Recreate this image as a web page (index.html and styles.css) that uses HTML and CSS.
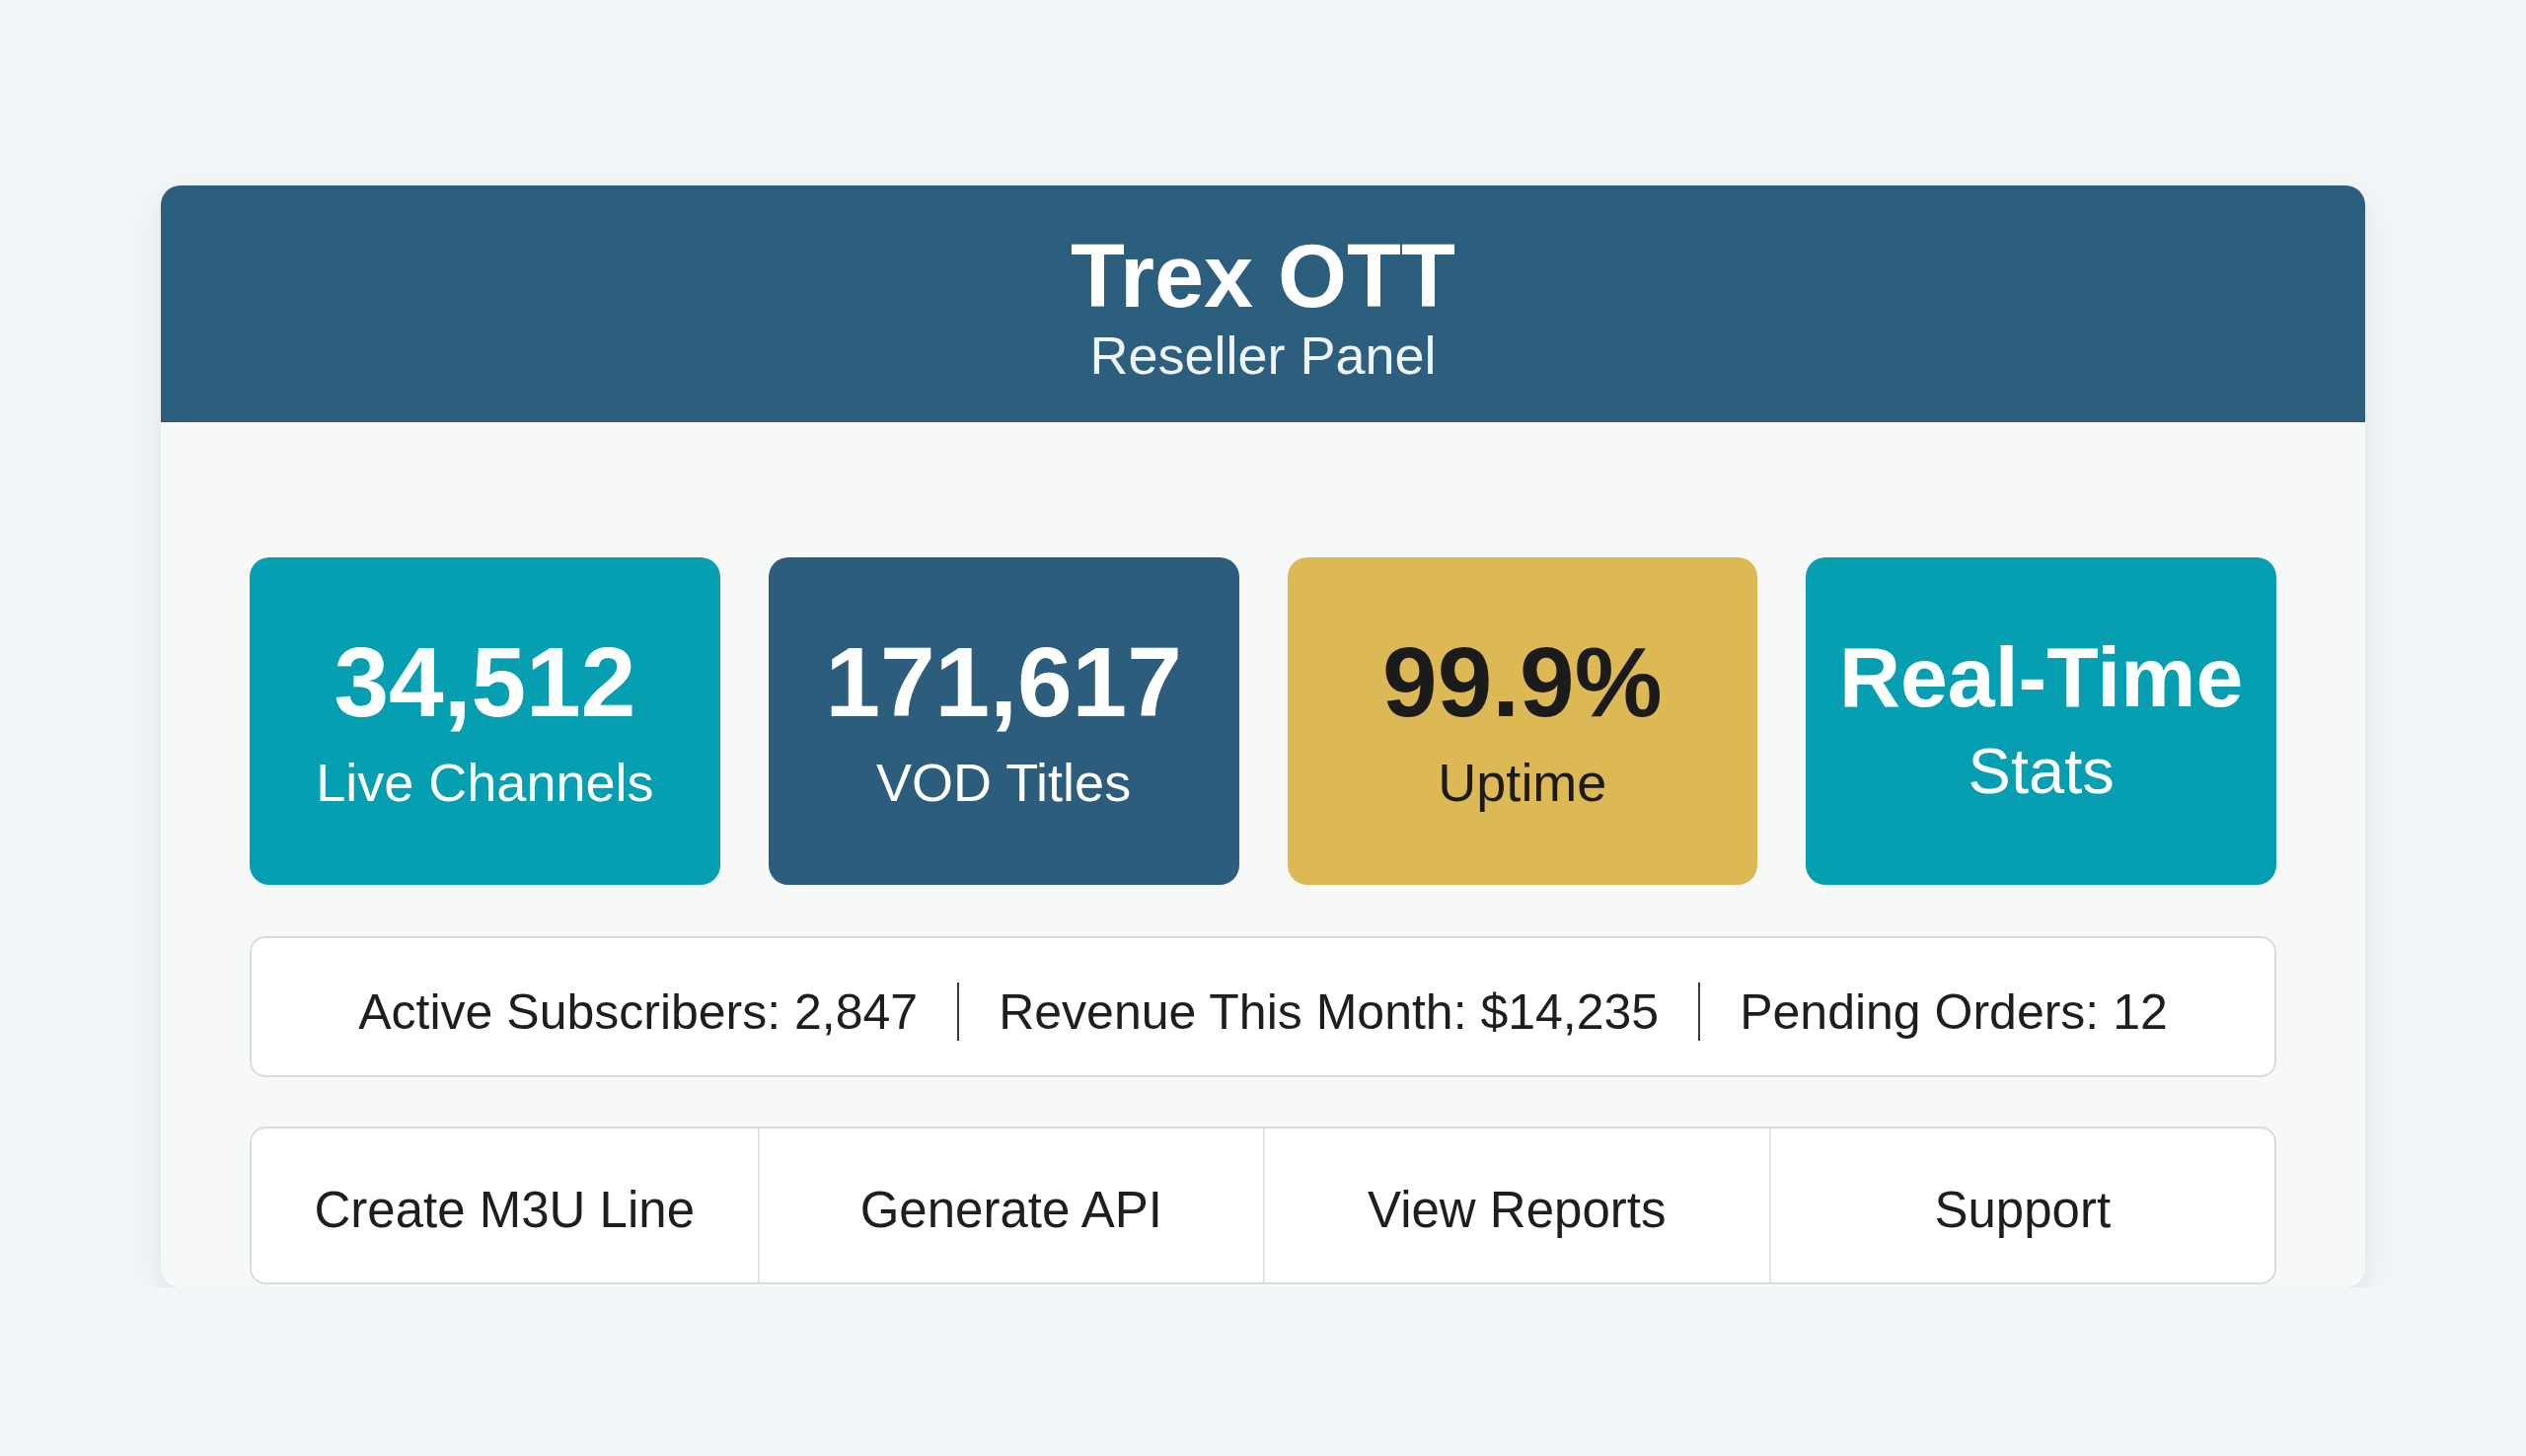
FILE: index.html
```html
<!DOCTYPE html>
<html lang="en">
  <head>
    <meta charset="UTF-8" />
    <meta name="viewport" content="width=device-width, initial-scale=1.0" />
    <title>Trex OTT - Reseller Panel</title>
    <link rel="stylesheet" href="styles.css">
  </head>
  <body>
    <main class="panel">
      <header class="panel-header">
        <h1>Trex OTT</h1>
        <p>Reseller Panel</p>
      </header>
      <section class="panel-body">
        <div class="stats">
          <div class="stat stat-teal">
            <span class="stat-value">34,512</span>
            <span class="stat-label">Live Channels</span>
          </div>
          <div class="stat stat-navy">
            <span class="stat-value">171,617</span>
            <span class="stat-label">VOD Titles</span>
          </div>
          <div class="stat stat-gold">
            <span class="stat-value">99.9%</span>
            <span class="stat-label">Uptime</span>
          </div>
          <div class="stat stat-teal stat-compact">
            <span class="stat-value">Real-Time</span>
            <span class="stat-label">Stats</span>
          </div>
        </div>
        <div class="summary">
          <span>Active Subscribers: 2,847</span>
          <span class="divider"></span>
          <span>Revenue This Month: $14,235</span>
          <span class="divider"></span>
          <span>Pending Orders: 12</span>
        </div>
        <nav class="actions">
          <button type="button">Create M3U Line</button>
          <button type="button">Generate API</button>
          <button type="button">View Reports</button>
          <button type="button">Support</button>
        </nav>
      </section>
    </main>
  </body>
</html>
```
FILE: styles.css
```css
*,
*::before,
*::after {
  box-sizing: border-box;
}
body {
  margin: 0;
  padding-top: 188px;
  background: #f3f6f8;
  font-family: "Liberation Sans", Arial, sans-serif;
  color: #1e1e1e;
}
.panel {
  width: 2234px;
  margin: 0 auto;
  background: #f7f8f8;
  border-radius: 20px;
  overflow: hidden;
  box-shadow: 0 12px 32px rgba(40, 55, 70, 0.1);
}
.panel-header {
  background: #2c5e7e;
  color: #fff;
  text-align: center;
  padding: 47px 0 41px;
}
.panel-header h1 {
  margin: 0;
  font-size: 90px;
  line-height: 1;
  font-weight: 700;
}
.panel-header p {
  margin: 8px 0 0;
  font-size: 54px;
  line-height: 1;
  color: #eef4f8;
}
.panel-body {
  padding: 137px 90px 3px;
}

/* stat tiles */
.stats {
  display: grid;
  grid-template-columns: repeat(4, 1fr);
  gap: 49px;
}
.stat {
  height: 332px;
  border-radius: 20px;
  display: flex;
  flex-direction: column;
  align-items: center;
  justify-content: center;
  padding-bottom: 6px;
  color: #fff;
}
.stat-teal {
  background: #069fb1;
}
.stat-navy {
  background: #2c5d7d;
}
.stat-gold {
  background: #ddb955;
  color: #1b1b1b;
}
.stat-value {
  font-size: 100px;
  line-height: 1.2;
  font-weight: 700;
}
.stat-label {
  margin-top: 10px;
  font-size: 54px;
  line-height: 1.2;
}
.stat-compact .stat-value {
  font-size: 86px;
}
.stat-compact .stat-label {
  margin-top: 4px;
  font-size: 65px;
}

/* summary bar */
.summary {
  margin-top: 52px;
  height: 143px;
  padding-top: 10px;
  display: flex;
  align-items: center;
  justify-content: center;
  background: #fff;
  border: 2px solid #d9dcdf;
  border-radius: 16px;
  font-size: 50px;
  line-height: 1.2;
}
.divider {
  width: 2px;
  height: 59px;
  margin: 0 40px;
  background: #3a3a3a;
}

/* action buttons */
.actions {
  margin-top: 50px;
  height: 160px;
  display: grid;
  grid-template-columns: repeat(4, 1fr);
  background: #fff;
  border: 2px solid #d9dcdf;
  border-radius: 16px;
  overflow: hidden;
}
.actions button {
  border: none;
  border-left: 2px solid #e2e4e6;
  background: transparent;
  padding: 8px 0 0;
  font-family: inherit;
  font-size: 51px;
  color: #1e1e1e;
  cursor: pointer;
}
.actions button:first-child {
  border-left: none;
}
.actions button:hover {
  background: #f4f6f7;
}
```
